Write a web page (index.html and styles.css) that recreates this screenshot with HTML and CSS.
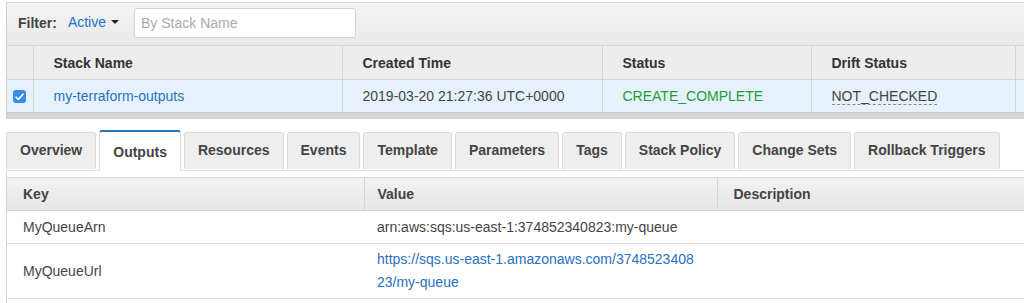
FILE: index.html
```html
<!DOCTYPE html>
<html lang="en">

<head>
  <meta charset="UTF-8" />
  <title>CloudFormation Stacks</title>
  <link rel="stylesheet" href="styles.css">
</head>

<body>

  <div class="stacks">
    <div class="filter-bar">
      <span class="filter-label">Filter:</span>
      <a href="#" class="filter-select">Active <span class="caret"></span></a>
      <input type="text" class="filter-input" placeholder="By Stack Name">
    </div>

    <table class="grid">
      <colgroup>
        <col class="c-check">
        <col class="c-name">
        <col class="c-time">
        <col class="c-status">
        <col class="c-drift">
        <col class="c-rest">
      </colgroup>
      <thead>
        <tr>
          <th></th>
          <th>Stack Name</th>
          <th>Created Time</th>
          <th>Status</th>
          <th>Drift Status</th>
          <th></th>
        </tr>
      </thead>
      <tbody>
        <tr class="selected">
          <td class="check-cell">
            <span class="checkbox">
              <svg width="9" height="8" viewBox="0 0 9 8">
                <path d="M1 4.2 L3.4 6.4 L8 1.2" fill="none" stroke="#fff" stroke-width="1.6" stroke-linecap="round" stroke-linejoin="round" />
              </svg>
            </span>
          </td>
          <td><a href="#">my-terraform-outputs</a></td>
          <td>2019-03-20 21:27:36 UTC+0000</td>
          <td class="ok">CREATE_COMPLETE</td>
          <td><span class="drift">NOT_CHECKED</span></td>
          <td></td>
        </tr>
      </tbody>
    </table>
    <div class="splitter"></div>
  </div>

  <div class="details">
    <div class="tabs">
      <a href="#" class="tab">Overview</a>
      <a href="#" class="tab active">Outputs</a>
      <a href="#" class="tab">Resources</a>
      <a href="#" class="tab">Events</a>
      <a href="#" class="tab">Template</a>
      <a href="#" class="tab">Parameters</a>
      <a href="#" class="tab">Tags</a>
      <a href="#" class="tab">Stack Policy</a>
      <a href="#" class="tab">Change Sets</a>
      <a href="#" class="tab">Rollback Triggers</a>
    </div>

    <div class="tab-panel">
      <table class="outputs">
        <colgroup>
          <col class="o-key">
          <col class="o-value">
          <col class="o-desc">
        </colgroup>
        <thead>
          <tr>
            <th>Key</th>
            <th class="val">Value</th>
            <th>Description</th>
          </tr>
        </thead>
        <tbody>
          <tr>
            <td>MyQueueArn</td>
            <td class="val">arn:aws:sqs:us-east-1:374852340823:my-queue</td>
            <td></td>
          </tr>
          <tr class="tall">
            <td>MyQueueUrl</td>
            <td class="val"><a href="#">https://sqs.us-east-1.amazonaws.com/3748523408<br>23/my-queue</a></td>
            <td></td>
          </tr>
          <tr>
            <td></td>
            <td></td>
            <td></td>
          </tr>
        </tbody>
      </table>
    </div>
  </div>

</body>

</html>
```

FILE: styles.css
```css
body {
  font-family: 'Liberation Sans', Arial, Helvetica, sans-serif;
  font-size: 14px;
  color: #444;
  background: #fff;
  margin: 0;
  padding: 0;
  overflow: hidden;
}

a {
  color: #2771c1;
  text-decoration: none;
}

.stacks {
  margin: 2px 0 0 6px;
  border-top: 1px solid #d8d8d8;
  border-left: 1px solid #d0d0d0;
  overflow: hidden;
}

.filter-bar {
  display: flex;
  align-items: center;
  height: 42px;
  padding-left: 11px;
  background: linear-gradient(#f4f4f4, #e9e9e9);
  border-bottom: 1px solid #d6d6d6;
}

.filter-label {
  font-weight: bold;
  color: #444;
  margin-right: 11px;
  margin-top: -2px;
}

.filter-select {
  display: flex;
  align-items: center;
  margin-top: -4px;
}

.caret {
  display: inline-block;
  width: 0;
  height: 0;
  margin-left: 5px;
  border-left: 4px solid transparent;
  border-right: 4px solid transparent;
  border-top: 4px solid #222;
}

.filter-input {
  margin-left: 15px;
  width: 222px;
  height: 30px;
  box-sizing: border-box;
  padding: 0 6px;
  border: 1px solid #d4d4d4;
  border-radius: 3px;
  font-family: inherit;
  font-size: 14px;
  margin-top: -2px;
}

.filter-input::placeholder {
  color: #aaa;
}

.grid {
  table-layout: fixed;
  border-collapse: collapse;
  width: 1100px;
}

.c-check { width: 26px; }
.c-name { width: 309px; }
.c-time { width: 260px; }
.c-status { width: 209px; }
.c-drift { width: 204px; }
.c-rest { width: 92px; }

.grid th {
  height: 33px;
  padding: 0 0 0 20px;
  text-align: left;
  font-weight: bold;
  color: #333;
  background: #ededed;
  border-right: 1px solid #d6d6d6;
  border-bottom: 1px solid #d6d6d6;
}

.grid td {
  height: 32px;
  padding: 0 0 0 20px;
  color: #444;
  border-right: 1px solid #d6d6d6;
  white-space: nowrap;
}

.grid tr.selected td {
  background: #e6f1fc;
}

.grid td.check-cell {
  padding: 0 0 0 6px;
}

.checkbox {
  display: flex;
  align-items: center;
  justify-content: center;
  width: 13px;
  height: 13px;
  border-radius: 3px;
  background: #3a8ae8;
  margin-top: 1px;
}

.grid td.ok {
  color: #1f9d35;
}

.drift {
  border-bottom: 1px dashed #888;
}

.splitter {
  height: 6px;
  border-top: 1px solid #c8c8c8;
  background: #d5d5d5;
}

.details {
  margin: 11px 0 0 6px;
}

.tabs {
  display: flex;
  align-items: flex-end;
  gap: 3px;
  height: 40px;
  border-bottom: 1px solid #e0e0e0;
}

.tab {
  display: block;
  height: 37px;
  line-height: 34px;
  box-sizing: border-box;
  padding: 0 13px;
  margin-bottom: 1px;
  background: #eeeeee;
  border: 1px solid #dadada;
  border-bottom: none;
  border-radius: 3px 3px 0 0;
  color: #444;
  font-weight: bold;
  white-space: nowrap;
}

.tab.active {
  height: 41px;
  line-height: 37px;
  margin-bottom: -1px;
  padding-top: 2px;
  background: #fff;
  border-top: 2px solid #2771c1;
}

.tab-panel {
  border-left: 1px solid #d6d6d6;
  padding-top: 6px;
}

.outputs {
  table-layout: fixed;
  border-collapse: collapse;
  width: 1018px;
}

.o-key { width: 357px; }
.o-value { width: 353px; }
.o-desc { width: 308px; }

.outputs th {
  height: 32px;
  padding: 0 0 0 16px;
  text-align: left;
  font-weight: bold;
  color: #444;
  background: linear-gradient(#f2f2f2, #e6e6e6);
  border-top: 1px solid #dcdcdc;
  border-right: 1px solid #d6d6d6;
  border-bottom: 1px solid #d6d6d6;
}

.outputs td {
  height: 32px;
  padding: 0 0 0 16px;
  color: #444;
  border-bottom: 1px solid #dedede;
  white-space: nowrap;
}

.outputs .val {
  padding-left: 13px;
}

.outputs tr.tall td {
  height: 54px;
  line-height: 23px;
}
```
